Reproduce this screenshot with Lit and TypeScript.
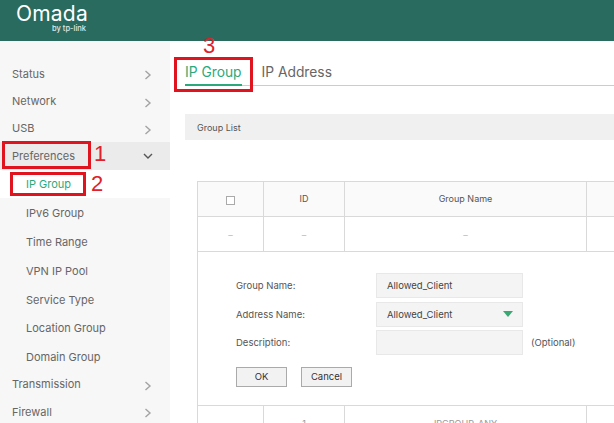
import { LitElement, html, css } from 'lit';
import { customElement } from 'lit/decorators.js';

const chevronRight = html`<svg class="chev" width="8" height="10" viewBox="0 0 8 10"><path d="M1.5 1l4.5 4-4.5 4" fill="none" stroke="#a3a3a3" stroke-width="1.4"/></svg>`;
const chevronDown = html`<svg class="chev down" width="10" height="8" viewBox="0 0 10 8"><path d="M1 2l4 4 4-4" fill="none" stroke="#555" stroke-width="1.4"/></svg>`;

@customElement('app-root')
export class AppRoot extends LitElement {
  static styles = css`
    :host {
      display: block;
      position: relative;
      width: 614px;
      height: 423px;
      overflow: hidden;
      background: #fff;
      font-family: Inter, "Noto Sans", sans-serif;
      font-size: 10px;
      color: #555;
    }
    .header {
      height: 41px;
      background: #2a6b5f;
      color: #fff;
      box-sizing: border-box;
      padding: 4px 0 0 16px;
    }
    .logo-main {
      font-size: 21px;
      line-height: 20px;
      font-weight: 400;
      letter-spacing: 0.2px;
    }
    .logo-sub {
      font-size: 7.5px;
      line-height: 8px;
      margin-top: 1px;
      font-weight: 500;
      text-align: right;
      width: 70px;
      opacity: 0.85;
    }
    .body {
      display: flex;
      height: 382px;
    }
    .sidebar {
      width: 170px;
      flex: none;
      background: #f7f7f7;
      padding-top: 19px;
      box-sizing: border-box;
    }
    .item {
      display: flex;
      align-items: center;
      justify-content: space-between;
      height: 27.4px;
      padding: 0 18px 0 12px;
      font-size: 11px;
      color: #666;
    }
    .sub + .item {
      margin-top: -1px;
    }
    .item.open {
      background: #ebebeb;
    }
    .chev {
      margin-top: 3px;
    }
    .chev.down {
      margin: 1px -1px 0 0;
    }
    .sub {
      display: flex;
      align-items: center;
      height: 28.9px;
      padding-left: 26px;
      font-size: 11px;
      color: #666;
    }
    .sub.active {
      background: #fff;
      color: #2ca97a;
    }
    .main {
      flex: 1;
      min-width: 0;
      overflow: hidden;
      padding-left: 15px;
    }
    .tabs {
      display: flex;
      gap: 20px;
      height: 45px;
      box-sizing: border-box;
      border-bottom: 1px solid #ccc;
      margin-bottom: 28px;
    }
    .tab {
      font-size: 13.8px;
      line-height: 18px;
      padding-top: 22px;
      color: #666;
      height: 44px;
      box-sizing: border-box;
    }
    .tab.active {
      color: #2ca97a;
      border-bottom: 2px solid #2ca97a;
      height: 45px;
    }
    .bar {
      height: 26px;
      line-height: 27px;
      background: #f0f0f0;
      padding-left: 12px;
      font-size: 9px;
      margin-bottom: 41px;
    }
    table {
      margin-left: 12px;
      width: 560px;
      table-layout: fixed;
      border-collapse: collapse;
    }
    th, td {
      border: 1px solid #d9d9d9;
      height: 34px;
      padding: 0;
      text-align: center;
      font-size: 9px;
      font-weight: 400;
      color: #555;
    }
    th {
      background: #fafafa;
      padding-bottom: 2px;
      box-sizing: border-box;
      height: 35px;
    }
    .dash {
      color: #bbb;
    }
    .box {
      display: inline-block;
      width: 7px;
      height: 7px;
      border: 1px solid #aaa;
      background: #fff;
      vertical-align: middle;
      position: relative;
      top: 1px;
    }
    td.expand {
      height: 154px;
      text-align: left;
      padding: 21px 0 0 38px;
      box-sizing: border-box;
      vertical-align: top;
    }
    .form {
      display: grid;
      grid-template-columns: 140px 147px auto;
      grid-auto-rows: 25px;
      row-gap: 3.5px;
      align-items: center;
      font-size: 9.5px;
    }
    .field {
      box-sizing: border-box;
      height: 25px;
      border: 1px solid #e8e8e8;
      background: #f4f4f4;
      padding: 0 10px;
      display: flex;
      align-items: center;
      justify-content: space-between;
      color: #444;
    }
    .opt {
      padding-left: 8px;
    }
    .arrow {
      margin-right: -1px;
    }
    .buttons {
      display: flex;
      gap: 14px;
      margin-top: 12px;
    }
    .btn {
      box-sizing: border-box;
      width: 51px;
      height: 20px;
      line-height: 18px;
      text-align: center;
      background: #f2f2f2;
      border: 1px solid #aaa;
      color: #333;
      font-size: 9.5px;
    }
    .light {
      color: #999;
      vertical-align: top;
      padding-top: 12px;
      box-sizing: border-box;
    }
    .mark {
      position: absolute;
      border: 3px solid #e0141f;
      box-sizing: border-box;
    }
    .num {
      position: absolute;
      color: #e0202a;
      font-family: "Liberation Sans", sans-serif;
      font-size: 22px;
      line-height: 24px;
    }
  `;

  render() {
    const tail = ['Service Type', 'Location Group', 'Domain Group'];
    return html`
      <div class="header">
        <div class="logo-main">Omada</div>
        <div class="logo-sub">by tp-link</div>
      </div>
      <div class="body">
        <nav class="sidebar">
          <div class="item">Status ${chevronRight}</div>
          <div class="item">Network ${chevronRight}</div>
          <div class="item">USB ${chevronRight}</div>
          <div class="item open">Preferences ${chevronDown}</div>
          <div class="sub active">IP Group</div>
          <div class="sub">IPv6 Group</div>
          <div class="sub">Time Range</div>
          <div class="sub">VPN IP Pool</div>
          ${tail.map((t) => html`<div class="sub">${t}</div>`)}
          <div class="item">Transmission ${chevronRight}</div>
          <div class="item">Firewall ${chevronRight}</div>
        </nav>
        <main class="main">
          <div class="tabs">
            <div class="tab active">IP Group</div>
            <div class="tab">IP Address</div>
          </div>
          <div class="bar">Group List</div>
          <table>
            <colgroup>
              <col style="width:66px" />
              <col style="width:81px" />
              <col style="width:242px" />
              <col />
            </colgroup>
            <tr>
              <th><span class="box"></span></th>
              <th>ID</th>
              <th>Group Name</th>
              <th></th>
            </tr>
            <tr>
              <td class="dash">–</td>
              <td class="dash">–</td>
              <td class="dash">–</td>
              <td></td>
            </tr>
            <tr>
              <td class="expand" colspan="4">
                <div class="form">
                  <div>Group Name:</div>
                  <div class="field">Allowed_Client</div>
                  <div></div>
                  <div>Address Name:</div>
                  <div class="field">
                    Allowed_Client
                    <svg class="arrow" width="10" height="7" viewBox="0 0 10 7"><path d="M0 0h10L5 6z" fill="#3aa873" /></svg>
                  </div>
                  <div></div>
                  <div>Description:</div>
                  <div class="field"></div>
                  <div class="opt">(Optional)</div>
                </div>
                <div class="buttons">
                  <div class="btn">OK</div>
                  <div class="btn">Cancel</div>
                </div>
              </td>
            </tr>
            <tr>
              <td class="dash light">–</td>
              <td class="light">1</td>
              <td class="light">IPGROUP_ANY</td>
              <td></td>
            </tr>
          </table>
        </main>
      </div>
      <div class="mark" style="left:2px;top:141px;width:89px;height:28px"></div>
      <div class="mark" style="left:10px;top:172px;width:76px;height:24px"></div>
      <div class="mark" style="left:174px;top:57px;width:79px;height:35px"></div>
      <div class="num" style="left:94px;top:142px">1</div>
      <div class="num" style="left:91px;top:172px">2</div>
      <div class="num" style="left:203px;top:34px">3</div>
    `;
  }
}
